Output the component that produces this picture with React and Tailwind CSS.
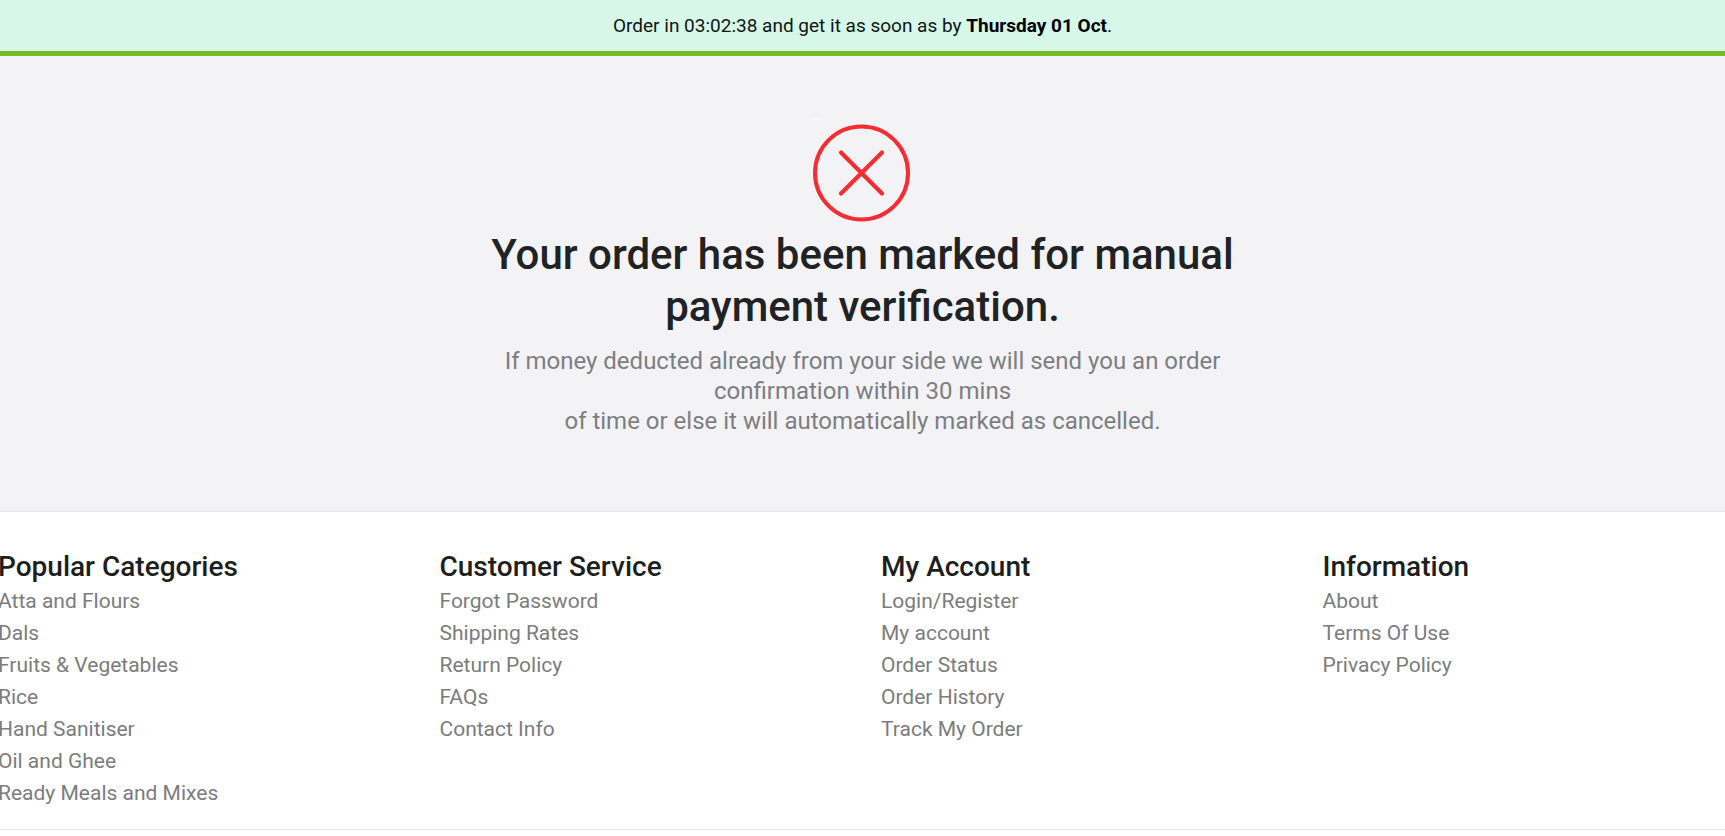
const columns = [
  {
    title: 'Popular Categories',
    links: ['Atta and Flours', 'Dals', 'Fruits & Vegetables', 'Rice', 'Hand Sanitiser', 'Oil and Ghee', 'Ready Meals and Mixes'],
  },
  {
    title: 'Customer Service',
    links: ['Forgot Password', 'Shipping Rates', 'Return Policy', 'FAQs', 'Contact Info'],
  },
  {
    title: 'My Account',
    links: ['Login/Register', 'My account', 'Order Status', 'Order History', 'Track My Order'],
  },
  {
    title: 'Information',
    links: ['About', 'Terms Of Use', 'Privacy Policy'],
  },
];

function DeliveryBanner() {
  return (
    <div className="border-b-[5px] border-[#78b928] bg-[#d7f7e9] px-4 py-3 text-center text-[19px] leading-[27px] text-[#0f1513]">
      Order in 03:02:38 and get it as soon as by <strong className="font-bold text-black">Thursday 01 Oct</strong>.
    </div>
  );
}

function FailedIcon() {
  return (
    <svg className="size-[104px]" viewBox="0 0 104 104" fill="none" aria-hidden="true">
      <path d="M1 0h8" stroke="#fff" strokeWidth="2" />
      <circle cx="50.5" cy="54" r="46.5" stroke="#f52d32" strokeWidth="4" />
      <path d="M30 33.500L71 74.500M71 33.500L30 74.500" stroke="#f52d32" strokeWidth="4.200" strokeLinecap="round" />
    </svg>
  );
}

function OrderStatus() {
  return (
    <main className="flex flex-col items-center border-b border-[#e6e6e8] bg-[#f3f3f6] px-4 pt-[63px] pb-[75px] text-center">
      <FailedIcon />
      <div className="max-w-[750px]">
        <h1 className="mt-[6px] text-[42px] leading-[52px] font-medium text-[#212224]">
          Your order has been marked for manual payment verification.
        </h1>
        <p className="mt-[13px] text-[24px] leading-[30px] text-[#7d7e82]">
          If money deducted already from your side we will send you an order confirmation within 30 mins
          <br />
          of time or else it will automatically marked as cancelled.
        </p>
      </div>
    </main>
  );
}

function Footer() {
  return (
    <footer className="border-b border-[#e6e6e8] pt-[37px] pb-5">
      <div className="-mr-[39px] -ml-[2px] grid grid-cols-4">
        {columns.map(({ title, links }) => (
          <nav key={title} aria-label={title}>
            <h2 className="text-[28px] leading-[36px] font-medium text-[#1d1e20]">{title}</h2>
            <ul>
              {links.map((link) => (
                <li key={link} className="text-[21px] leading-[32px] text-[#7b7c7e]">
                  <a href="#" className="hover:underline">{link}</a>
                </li>
              ))}
            </ul>
          </nav>
        ))}
      </div>
    </footer>
  );
}

export default function App() {
  return (
    <div className="min-h-screen overflow-x-hidden bg-white font-['Roboto','Liberation_Sans',sans-serif]">
      <DeliveryBanner />
      <OrderStatus />
      <Footer />
    </div>
  );
}
